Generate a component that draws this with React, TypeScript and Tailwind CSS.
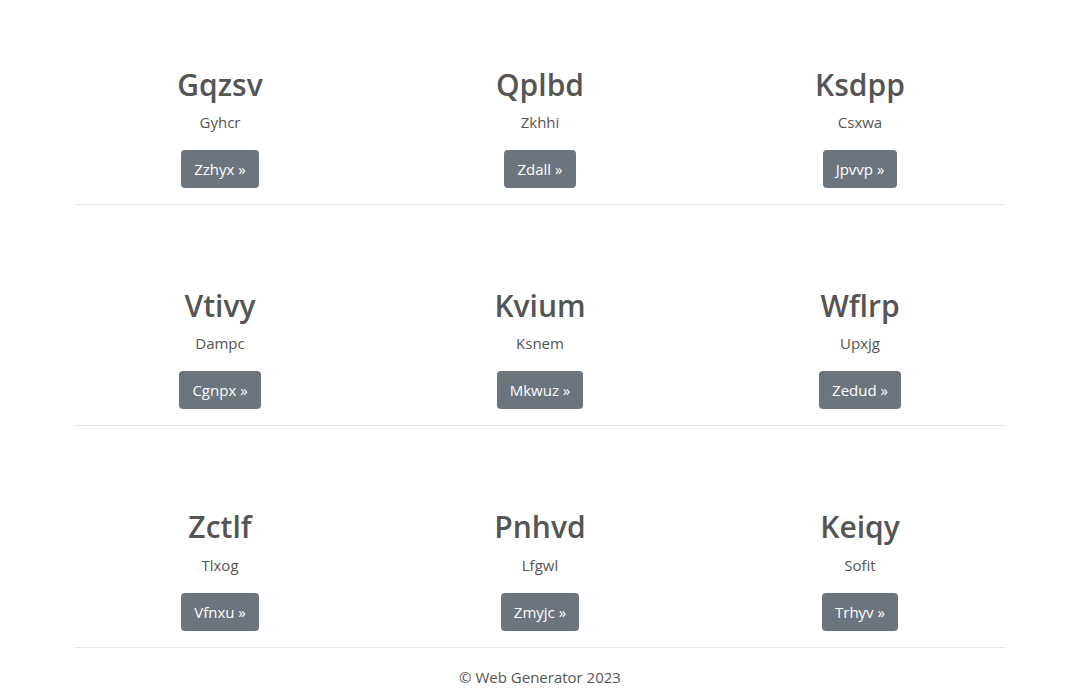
import React from "react";

const rows = [
  [
    ["Gqzsv", "Gyhcr", "Zzhyx"],
    ["Qplbd", "Zkhhi", "Zdall"],
    ["Ksdpp", "Csxwa", "Jpvvp"],
  ],
  [
    ["Vtivy", "Dampc", "Cgnpx"],
    ["Kvium", "Ksnem", "Mkwuz"],
    ["Wflrp", "Upxjg", "Zedud"],
  ],
  [
    ["Zctlf", "Tlxog", "Vfnxu"],
    ["Pnhvd", "Lfgwl", "Zmyjc"],
    ["Keiqy", "Sofit", "Trhyv"],
  ],
];

export default function App() {
  return (
    <div
      className="min-h-screen bg-white text-[#555]"
      style={{ fontFamily: '"Open Sans", "Noto Sans", "Liberation Sans", sans-serif' }}
    >
      <div className="w-[960px] mx-auto px-[15px]">
        {rows.map((row, i) => (
          <div key={i}>
            <div className="grid grid-cols-3 pt-[65.8px] mx-[-15px]">
              {row.map(([h, s, b]) => (
                <div key={h} className="flex flex-col items-center text-center">
                  <h2 className="text-[30px] leading-[38.4px] font-semibold text-[#555] mb-[6px]">{h}</h2>
                  <p className="text-[15px] leading-[24px] mb-[16px]">{s}</p>
                  <button className="bg-[#6c757d] text-white text-[15px] leading-[24px] px-[13px] py-[7px] rounded-[4px]">
                    {b} »
                  </button>
                </div>
              ))}
            </div>
            <hr className="mt-[16px] mb-[16px] border-0 border-t border-[#e5e5e5]" />
          </div>
        ))}
        <footer className="text-center text-[15px] leading-[24px] pt-[1px] pb-[4px]">© Web Generator 2023</footer>
      </div>
    </div>
  );
}
